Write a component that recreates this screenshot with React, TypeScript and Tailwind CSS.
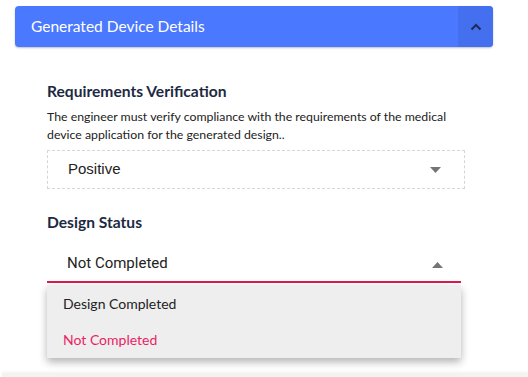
import { useState } from "react";

function Caret({ up }: { up?: boolean }) {
  return (
    <svg width="11" height="6" viewBox="0 0 11 6" className="shrink-0">
      <path d={up ? "M0 6 L5.5 0 L11 6 Z" : "M0 0 L11 0 L5.5 6 Z"} fill="#757575" />
    </svg>
  );
}

export default function App() {
  const [status, setStatus] = useState("Not Completed");
  const options = ["Design Completed", "Not Completed"];

  return (
    <div className="relative w-[528px] h-[377px] overflow-hidden bg-white font-['Lato','Noto_Sans',sans-serif]">
      <div className="pt-[6px] pl-[15px] w-[493px]">
        {/* accordion header */}
        <div className="flex h-[41px] items-stretch rounded-[4px] bg-[#4a78fe] shadow-[0_1px_2px_rgba(0,0,0,0.25)] overflow-hidden">
          <div className="flex-1 flex items-center pl-4 text-[15.5px] text-white">Generated Device Details</div>
          <button className="w-[35px] flex items-center justify-center bg-[#446fef]">
            <svg width="12" height="8" viewBox="0 0 12 8">
              <path d="M1.5 6.5 L6 2 L10.5 6.5" fill="none" stroke="#1f2b57" strokeWidth="2" />
            </svg>
          </button>
        </div>

        {/* body */}
        <div className="pl-8 pt-[34px] w-[450px]">
          <h3 className="text-[15.6px] font-bold text-[#1d2943] leading-[20px]">Requirements Verification</h3>
          <p className="mt-[7px] text-[12.3px] leading-[18px] text-[#222]">
            The engineer must verify compliance with the requirements of the medical device application for the generated
            design..
          </p>
          <div className="mt-[6px] h-[39px] w-[418px] border border-dashed border-[#d6d6d6] flex items-center justify-between pl-5 pr-[23px]">
            <span className="font-['Liberation_Sans',Arial,sans-serif] text-[15px] text-[#222]">Positive</span>
            <Caret />
          </div>

          <h3 className="mt-[23px] text-[15.6px] font-bold text-[#1d2943] leading-[20px]">Design Status</h3>
          <div className="relative mt-[16px] w-[414px]">
            <div className="h-[35px] flex items-center justify-between pl-5 pr-[18px] border-b-2 border-[#d81b50]">
              <span className="font-['Roboto',sans-serif] text-[15px] text-[#222] -mt-[3px]">{status}</span>
              <Caret up />
            </div>
            <ul className="absolute left-0 top-[37px] w-full bg-[#eeeeee] pb-[1px] shadow-[0_4px_8px_rgba(0,0,0,0.3)] z-10">
              {options.map((o) => (
                <li
                  key={o}
                  onClick={() => setStatus(o)}
                  className={`h-[36px] flex items-center pl-4 text-[14px] cursor-pointer ${
                    o === status ? "text-[#e91e63]" : "text-[#222]"
                  }`}
                >
                  {o}
                </li>
              ))}
            </ul>
          </div>
        </div>
      </div>

      <div className="absolute left-[2px] right-0 top-[373px] h-[4px] bg-[#f3f3f3] shadow-[0_-1px_3px_rgba(0,0,0,0.06)]" />
    </div>
  );
}
